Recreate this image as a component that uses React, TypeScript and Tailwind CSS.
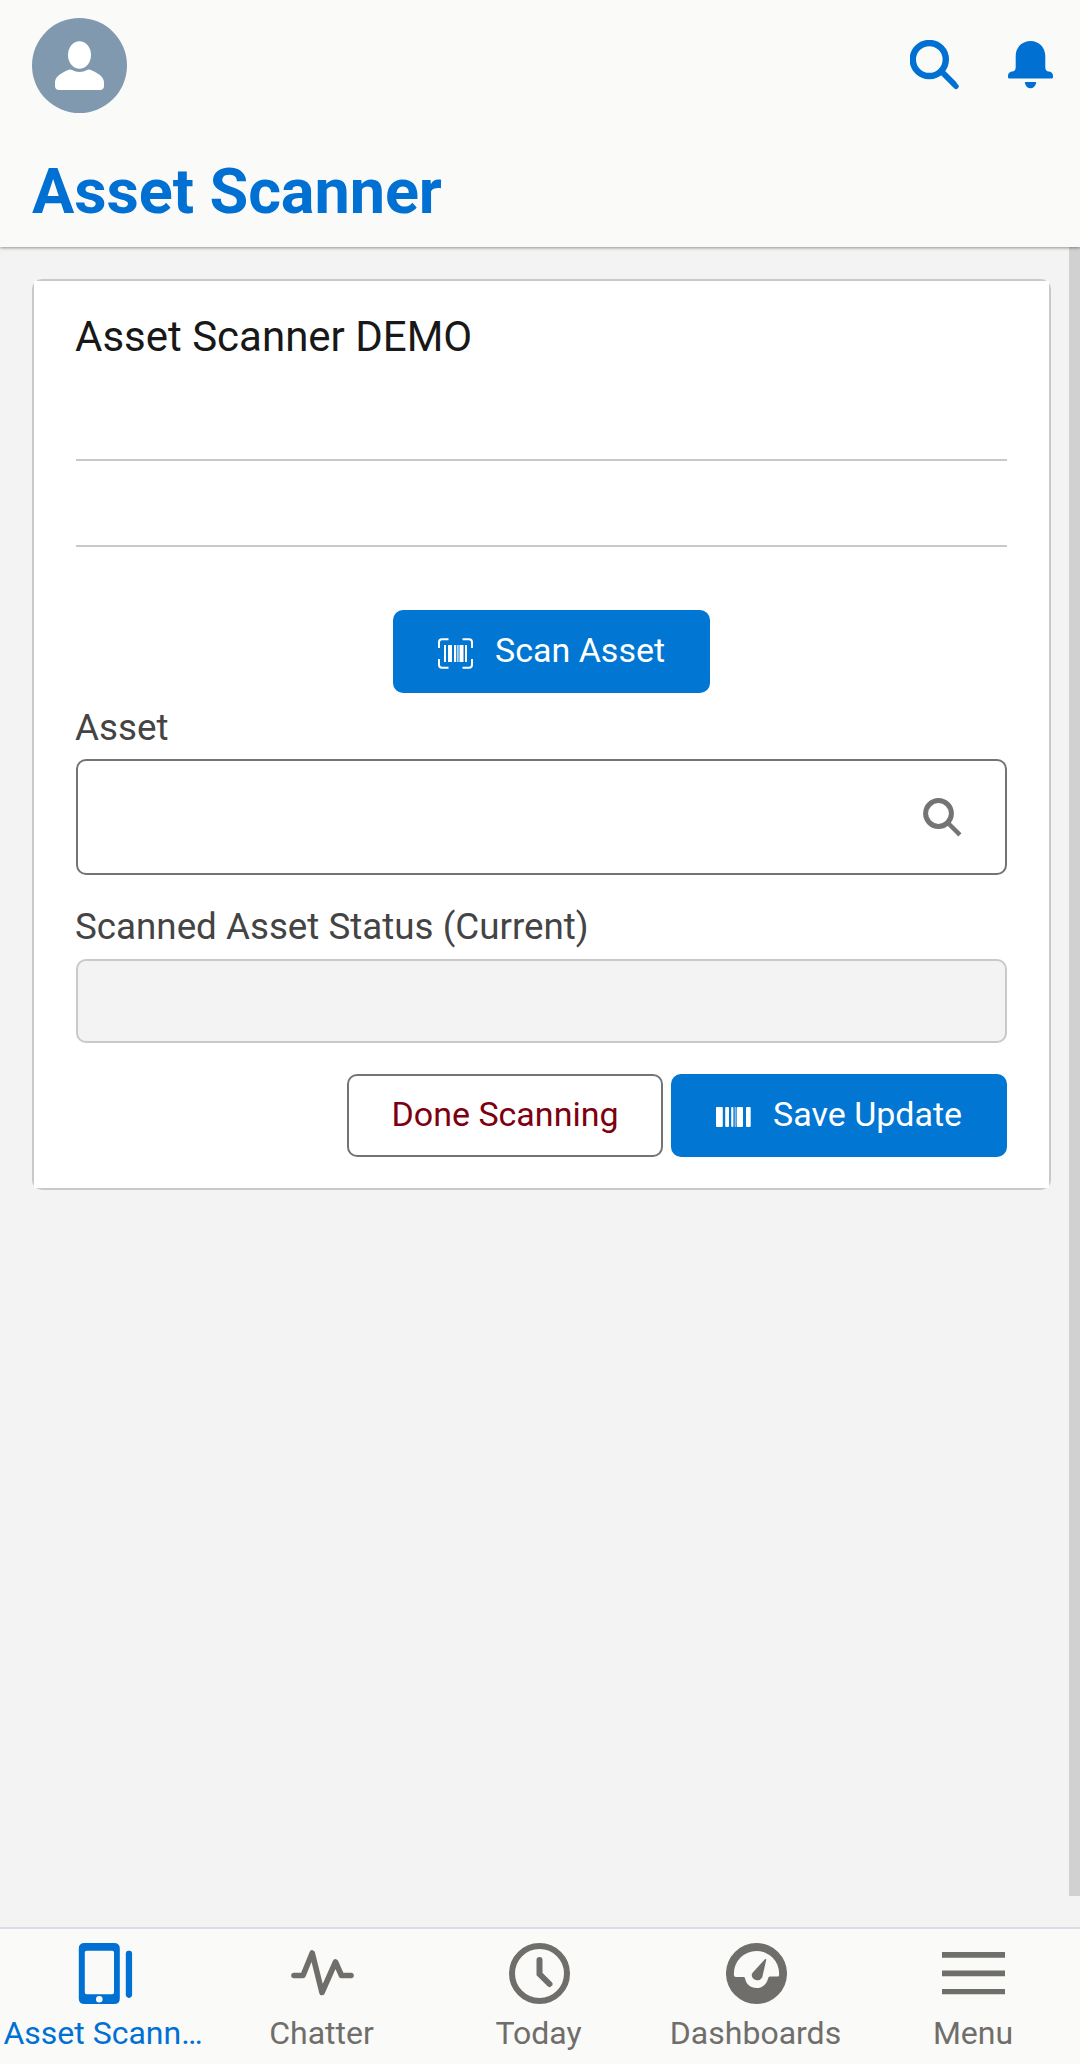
import React, { useState } from 'react';

type IconProps = { className?: string };

const SearchIcon = ({ className }: IconProps) => (
  <svg viewBox="0 0 50 50" className={className} fill="none" stroke="currentColor">
    <circle cx="19.3" cy="19.5" r="16.5" strokeWidth="6.4" />
    <path d="M31 31 L44.5 44.5" strokeWidth="6" />
    <path d="M44.3 44.6 L46 46.3" strokeWidth="5.4" strokeLinecap="round" />
  </svg>
);

const FieldSearchIcon = ({ className }: IconProps) => (
  <svg viewBox="0 0 39 39" className={className} fill="none" stroke="currentColor">
    <circle cx="15.5" cy="15.5" r="12.9" strokeWidth="5" />
    <path d="M24 24 L36.9 36.9" strokeWidth="4.4" />
  </svg>
);

const BellIcon = ({ className }: IconProps) => (
  <svg viewBox="0 0 45 48" className={className} fill="currentColor">
    <path d="M22.5 0 C14 0 7.7 6.6 7.7 15 V26 C7.7 29 6.6 30.4 4 30.5 C1.4 30.7 0 32.5 0 35 V36 C0 37 0.7 37.5 1.5 37.5 H43.5 C44.3 37.5 45 37 45 36 V35 C45 32.5 43.6 30.7 41 30.5 C38.4 30.4 37.3 29 37.3 26 V15 C37.3 6.6 31 0 22.5 0 Z" />
    <path d="M18 41 H27.2 C28 41 28.3 41.5 28.1 42.2 C27.3 45.2 25.2 47.2 22.5 47.2 C19.8 47.2 17.7 45.2 16.9 42.2 C16.7 41.5 17.2 41 18 41 Z" />
  </svg>
);

const UserIcon = ({ className }: IconProps) => (
  <svg viewBox="0 0 49 49" className={className} fill="currentColor">
    <ellipse cx="24.5" cy="14" rx="11.5" ry="13.8" />
    <path d="M14 28.8 C15 28.3 16.2 28.5 17 29 C21.5 31.5 27.5 31.5 32 29 C32.8 28.5 34 28.3 35 28.8 C42 31.5 49 35.5 49 41.5 V45 C49 47.4 47.4 49 45 49 H4 C1.6 49 0 47.4 0 45 V41.5 C0 35.5 7 31.5 14 28.8 Z" />
  </svg>
);

const ScanIcon = ({ className }: IconProps) => (
  <svg viewBox="0 0 35 31" className={className} fill="currentColor">
    <path
      d="M10.5 1.2 H4 Q1 1.2 1 4.2 V10 M24.5 1.2 H31 Q34 1.2 34 4.2 V10 M10.5 29.8 H4 Q1 29.8 1 26.8 V21 M24.500 29.8 H31 Q34 29.8 34 26.8 V21"
      fill="none"
      stroke="currentColor"
      strokeWidth="2"
    />
    <path d="M6 7h2v17h-2zM10 7h4v17h-4zM16 7h2.2v17h-2.2zM19.3 7h1.2v17h-1.2zM21.5 7h4v17h-4zM27 7h2v17h-2z" />
  </svg>
);

const BarcodeIcon = ({ className }: IconProps) => (
  <svg viewBox="0 0 35 20" className={className} fill="currentColor">
    <rect x="0" width="6.8" height="20" rx="1" />
    <rect x="9.2" width="3.8" height="20" rx="1" />
    <rect x="15.2" width="2.2" height="20" rx="1" />
    <rect x="18.7" width="1" height="20" opacity="0.7" />
    <rect x="20.7" width="6.3" height="20" rx="1" />
    <rect x="30" width="4.7" height="20" rx="1" />
  </svg>
);

const PhoneIcon = ({ className }: IconProps) => (
  <svg viewBox="0 0 61 61" className={className} fill="currentColor">
    <path
      fillRule="evenodd"
      d="M9.5 0 H39 Q44.8 0 44.8 5.5 V55.5 Q44.8 61 39 61 H9.5 Q3.8 61 3.8 55.5 V5.5 Q3.8 0 9.5 0 Z M11.5 7.8 Q9.8 7.8 9.8 9.5 V49.5 Q9.8 51.2 11.5 51.2 H37.300 Q39 51.2 39 49.5 V9.5 Q39 7.8 37.300 7.8 Z M24.3 52.900 A3.3 3.3 0 1 0 24.3 59.500 A3.3 3.3 0 1 0 24.3 52.900 Z"
    />
    <path d="M50.8 10.3 Q50.8 7.8 53 7.8 H55 Q57.1 7.8 57.1 10.3 V52 Q57.1 53.5 56 53.9 L54.8 54.7 Q54 55.2 53.2 54.7 L51.9 53.9 Q50.8 53.5 50.8 52 Z" />
  </svg>
);

const PulseIcon = ({ className }: IconProps) => (
  <svg viewBox="0 0 63 61" className={className} fill="none" stroke="currentColor" strokeLinecap="round" strokeLinejoin="round">
    <path d="M3 32.5 H12 L21.2 10 L31 49.5 L44.5 19 L50.5 32.5 H60" strokeWidth="5.6" />
  </svg>
);

const ClockIcon = ({ className }: IconProps) => (
  <svg viewBox="0 0 61 61" className={className} fill="none" stroke="currentColor">
    <circle cx="30.5" cy="30.5" r="27.5" strokeWidth="6" />
    <path d="M30.5 17 V31 L40.5 41" strokeWidth="6" strokeLinecap="round" strokeLinejoin="miter" />
  </svg>
);

const GaugeIcon = ({ className }: IconProps) => (
  <svg viewBox="0 0 61 61" className={className} fill="currentColor">
    <path
      fillRule="evenodd"
      d="M30.5 0 A30.5 30.5 0 1 0 30.5 61 A30.5 30.5 0 1 0 30.5 0 Z M10 34 Q8 34 7.9 32 V30.5 A22.6 22.6 0 0 1 53.1 30.5 V32 Q53.1 33.6 51.5 33.6 H44 Q42.5 33.6 42.1 35.2 C41 41 36.5 45 30.5 45 C24.5 45 20 41 19 35.2 Q18.7 34 17.5 34 Z"
    />
    <path d="M39.8 16 Q40.4 16.2 40.2 17 L36.2 34.5 A5.7 5.7 0 0 1 25.7 31.5 Q26 30.5 27 29.2 L38.9 16.3 Q39.4 15.8 39.8 16 Z" />
  </svg>
);

const MenuIcon = ({ className }: IconProps) => (
  <svg viewBox="0 0 63 61" className={className} fill="currentColor">
    <path d="M0 9h63v5.7h-63zM0 27.5h63v5.7h-63zM0 46h63v5.3h-63z" />
  </svg>
);

const tabs = [
  { label: 'Asset Scann…', icon: PhoneIcon, size: 'w-[61px]', shift: 'mr-[5px]' },
  { label: 'Chatter', icon: PulseIcon, size: 'w-[63px]', shift: 'mr-[2px]' },
  { label: 'Today', icon: ClockIcon, size: 'w-[61px]', shift: 'mr-[2px]' },
  { label: 'Dashboards', icon: GaugeIcon, size: 'w-[61px]', shift: 'mr-[2px]' },
  { label: 'Menu', icon: MenuIcon, size: 'w-[63px]', shift: 'mr-[1px]' },
];

const App = () => {
  const [activeTab, setActiveTab] = useState<number>(0);
  const [asset, setAsset] = useState<string>('');

  return (
    <div className="flex h-[2064px] w-[1080px] flex-col overflow-hidden bg-[#f3f3f3] font-[Roboto,sans-serif]">
      <header className="z-10 h-[247px] shrink-0 bg-[#fafaf9] text-[#0070d2] shadow-[0_1px_3px_rgba(0,0,0,0.4)]">
        <div className="flex justify-between pt-[18px] pr-[27px] pl-8">
          <div className="flex size-[95px] items-center justify-center rounded-full bg-[#8199af] text-white">
            <UserIcon className="size-[49px]" />
          </div>
          <div className="flex gap-[48px] pt-[22px]">
            <SearchIcon className="size-[50px]" />
            <BellIcon className="mt-[1px] h-[48px] w-[45px]" />
          </div>
        </div>
        <h1 className="mt-[42px] pl-8 text-[63px] leading-[74px] font-bold tracking-[-0.1px] whitespace-nowrap">Asset Scanner</h1>
      </header>

      <main className="flex flex-1 justify-between">
        <div className="mt-8 ml-8 h-[911px] w-[1019px] rounded-[10px] bg-[#c9c9c9] p-[2px]">
          <div className="h-full bg-white px-[42px] pt-[31px]">
            <h2 className="-ml-px text-[42px] leading-[50px] text-[#181818]">Asset Scanner DEMO</h2>
            <hr className="mt-[97px] border-t-2 border-[#c9c9c9]" />
            <hr className="mt-[84px] border-t-2 border-[#c9c9c9]" />

            <button className="mt-[63px] ml-[317px] flex h-[83px] w-[317px] items-center rounded-[10px] bg-[#0176d3] pl-[45px] text-[34px] text-white">
              <ScanIcon className="mt-[4px] h-[31px] w-[35px]" />
              <span className="mb-[2px] ml-[22px]">Scan Asset</span>
            </button>

            <label htmlFor="asset" className="mt-[13px] -ml-px block text-[36.75px] leading-[44px] text-[#444444]">Asset</label>
            <div className="mt-[9px] flex h-[116px] items-center justify-between rounded-[10px] border-2 border-[#747474] bg-white pr-[43px]">
              <input
                id="asset"
                className="h-full flex-1 bg-transparent pl-8 text-[36px] outline-none"
                value={asset}
                onChange={(e) => setAsset(e.target.value)}
              />
              <FieldSearchIcon className="size-[39px] text-[#747474]" />
            </div>

            <label htmlFor="status" className="mt-[30px] -ml-px block text-[36.75px] leading-[44px] text-[#444444]">Scanned Asset Status (Current)</label>
            <input id="status" disabled className="mt-[10px] block h-[84px] w-full rounded-[10px] border-2 border-[#c9c9c9] bg-[#f3f3f3]" />

            <div className="mt-[31px] flex justify-end gap-2">
              <button className="h-[83px] w-[316px] rounded-[10px] border-2 border-[#747474] bg-white pb-[2px] text-[34px] text-[#7e0010]">Done Scanning</button>
              <button className="flex h-[83px] w-[336px] items-center rounded-[10px] bg-[#0176d3] pl-[45px] text-[34px] text-white">
                <BarcodeIcon className="mt-[3px] h-[20px] w-[35px]" />
                <span className="mb-[2px] ml-[22px]">Save Update</span>
              </button>
            </div>
          </div>
        </div>
        <div className="h-[1649px] w-[11px] bg-[#d1d1d1]"></div>
      </main>

      <nav className="-mx-[3px] flex h-[137px] w-[1086px] shrink-0 border-t-2 border-[#d8dde6] bg-[#fafaf9]">
        {tabs.map((tab, index) => (
          <button
            key={tab.label}
            onClick={() => setActiveTab(index)}
            className={`flex w-[217px] shrink-0 flex-col items-center pt-[14px] text-[32px] leading-[37px] whitespace-nowrap ${index === activeTab ? 'text-[#0070d2]' : 'text-[#706e6b]'}`}
          >
            <tab.icon className={`h-[61px] ${tab.size}`} />
            <span className={`mt-[11px] ${tab.shift}`}>{tab.label}</span>
          </button>
        ))}
      </nav>
    </div>
  );
};

export default App;
